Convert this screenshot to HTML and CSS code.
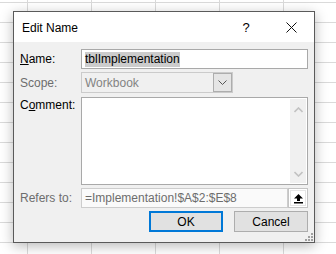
FILE: index.html
```html
<!DOCTYPE html>
<html>
<head>
<meta charset="utf-8">
<link rel="stylesheet" href="styles.css">
</head>
<body>
<div class="dialog">
  <div class="titlebar">
    <span class="title">Edit Name</span>
    <span class="help">?</span>
    <span class="close">
      <svg width="11" height="11" viewBox="0 0 11 11"><path d="M0.5 0.5 L10.5 10.5 M10.5 0.5 L0.5 10.5" stroke="#111" stroke-width="1" fill="none"/></svg>
    </span>
  </div>
  <div class="body">
    <div class="form">
      <label class="lbl lbl-mid"><u>N</u>ame:</label>
      <div class="field name-field"><span class="sel">tblImplementation</span></div>

      <label class="lbl lbl-mid disabled">Scope:</label>
      <div class="scope-row">
        <div class="select">
          <span class="select-text">Workbook</span>
          <span class="select-btn">
            <svg width="9" height="5" viewBox="0 0 9 5"><path d="M0.5 0.5 L4.5 4.5 L8.5 0.5" stroke="#555" fill="none"/></svg>
          </span>
        </div>
      </div>

      <label class="lbl lbl-top">C<u>o</u>mment:</label>
      <div class="field comment">
        <div class="scrollbar">
          <svg width="9" height="6" viewBox="0 0 9 6"><path d="M0.5 5 L4.5 1 L8.5 5" stroke="#c2c2c2" stroke-width="1.6" fill="none"/></svg>
          <svg width="9" height="6" viewBox="0 0 9 6"><path d="M0.5 1 L4.5 5 L8.5 1" stroke="#c2c2c2" stroke-width="1.6" fill="none"/></svg>
        </div>
      </div>

      <label class="lbl lbl-mid disabled">Refers to:</label>
      <div class="refers-row">
        <div class="field refers">=Implementation!$A$2:$E$8</div>
        <div class="collapse">
          <svg width="11" height="11" viewBox="0 0 11 11"><path d="M5.5 1 L10 5.5 L7 5.5 L7 8 L4 8 L4 5.5 L1 5.5 Z" fill="#000"/><rect x="1" y="9" width="9" height="1.5" fill="#000"/></svg>
        </div>
      </div>
    </div>
    <div class="buttons">
      <button class="btn default">OK</button>
      <button class="btn">Cancel</button>
    </div>
    <div class="grip">
      <svg width="8" height="8" viewBox="0 0 8 8"><g fill="#a0a0a0"><rect x="6" y="0" width="2" height="2"/><rect x="3" y="3" width="2" height="2"/><rect x="6" y="3" width="2" height="2"/><rect x="0" y="6" width="2" height="2"/><rect x="3" y="6" width="2" height="2"/><rect x="6" y="6" width="2" height="2"/></g></svg>
    </div>
  </div>
</div>
</body>
</html>
```
FILE: styles.css
```css
html, body {
  margin: 0;
  padding: 0;
}
body {
  width: 336px;
  height: 254px;
  overflow: hidden;
  box-sizing: border-box;
  padding: 11px 0 0 13px;
  background-color: #fff;
  background-image:
    linear-gradient(to right, #dadada 1px, transparent 1px),
    linear-gradient(to bottom, #dadada 1px, transparent 1px);
  background-size: 64px 100%, 100% 20px;
  background-position: 27px 0, 0 2px;
  font-family: "Liberation Sans", Arial, sans-serif;
  font-size: 12px;
  color: #000;
}
.dialog {
  width: 302px;
  height: 232px;
  box-sizing: border-box;
  border: 1px solid #5a5a5a;
  background: #f0f0f0;
  box-shadow: 0 3px 12px rgba(0,0,0,0.28);
  display: flex;
  flex-direction: column;
}
.titlebar {
  height: 30px;
  background: #fff;
  display: flex;
  align-items: center;
  padding-left: 8px;
  flex: none;
}
.title {
  flex: 1;
  font-size: 12px;
  margin-top: 1px;
}
.help {
  width: 14px;
  text-align: center;
  margin-right: 33px;
  font-size: 13px;
}
.close {
  width: 11px;
  height: 11px;
  margin-right: 17px;
  display: flex;
}
.body {
  flex: 1;
  position: relative;
  padding: 7px 6px 0 6px;
  display: flex;
  flex-direction: column;
}
.form {
  display: grid;
  grid-template-columns: 61px 1fr;
  grid-template-rows: 20px 21px 89px 20px;
  row-gap: 3px;
}
.form > :nth-child(5), .form > :nth-child(6) { margin-top: 1px; }
.lbl {
  display: flex;
  padding-left: 0;
  white-space: nowrap;
}
.lbl-mid { align-items: center; }
.lbl-top { align-items: flex-start; padding-top: 1px; }
.disabled { color: #6d6d6d; }
.field {
  box-sizing: border-box;
  border: 1px solid #a9a9a9;
  background: #fff;
  display: flex;
  align-items: center;
  padding-left: 3px;
  white-space: nowrap;
  overflow: hidden;
}
.sel {
  background: #cccccc;
  color: #000;
  line-height: 15px;
}
.scope-row { display: flex; }
.select {
  width: 152px;
  box-sizing: border-box;
  border: 1px solid #cbcbcb;
  background: #f0f0f0;
  display: flex;
  align-items: stretch;
}
.select-text {
  flex: 1;
  color: #838383;
  padding-left: 3px;
  display: flex;
  align-items: center;
}
.select-btn {
  width: 17px;
  background: #e5e5e5;
  border: 1px solid #adadad;
  display: flex;
  align-items: center;
  justify-content: center;
}
.comment {
  align-items: stretch;
  justify-content: flex-end;
  padding: 1px;
}
.scrollbar {
  width: 16px;
  background: #f0f0f0;
  display: flex;
  flex-direction: column;
  align-items: center;
  justify-content: space-between;
  padding: 8px 0 6px;
}
.refers-row { display: flex; }
.refers {
  flex: 1;
  color: #6d6d6d;
  border-color: #cdcdcd;
  background: #fafafa;
}
.collapse {
  width: 20px;
  box-sizing: border-box;
  border: 1px solid #c4c4c4;
  background: #fff;
  display: flex;
  align-items: center;
  justify-content: center;
  box-shadow: inset 0 0 0 1px #fff, inset 0 0 0 2px #e5e5e5;
}
.buttons {
  display: flex;
  justify-content: flex-end;
  gap: 11px;
  margin-top: 3px;
}
.btn {
  font: inherit;
  color: #000;
  width: 74px;
  height: 21px;
  box-sizing: border-box;
  border: 1px solid #adadad;
  background: #e1e1e1;
  padding: 0;
  margin: 0;
}
.btn.default {
  border: 2px solid #0078d7;
}
.grip {
  position: absolute;
  right: 1px;
  bottom: 1px;
  width: 8px;
  height: 8px;
  display: flex;
}
```
